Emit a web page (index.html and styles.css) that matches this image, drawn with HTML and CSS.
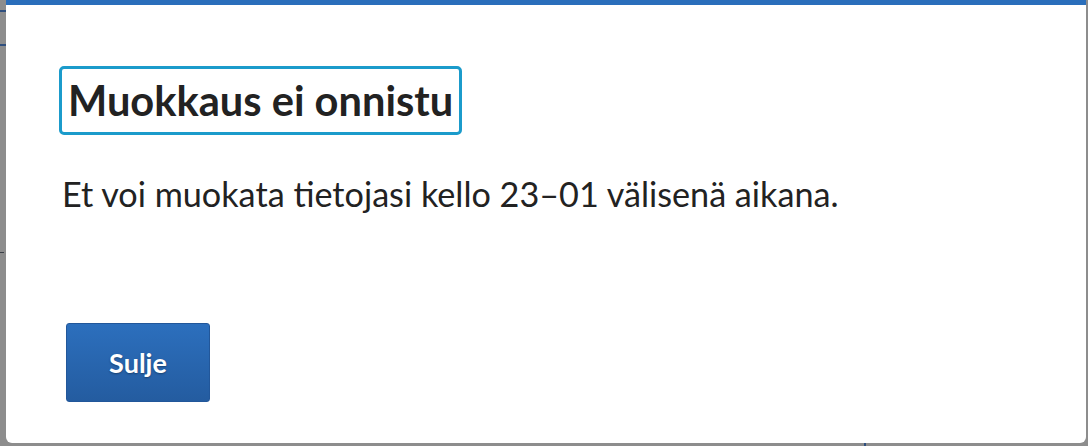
FILE: index.html
```html
<!DOCTYPE html>
<html lang="fi">
<head>
    <meta charset="UTF-8">
    <meta name="viewport" content="width=device-width, initial-scale=1.0">
    <title>Muokkaus ei onnistu</title>
    <link rel="stylesheet" href="styles.css">
</head>
<body>
    <div class="backdrop">
        <div class="dialog" role="dialog" aria-labelledby="dialog-title">
            <h2 class="dialog-title" id="dialog-title" tabindex="-1">Muokkaus ei onnistu</h2>
            <p class="dialog-text">Et voi muokata tietojasi kello 23–01 välisenä aikana.</p>
            <button class="btn" type="button">Sulje</button>
        </div>
    </div>
</body>
</html>
```

FILE: styles.css
```css
*{
    margin:0;
    padding:0;
    box-sizing:border-box;
}
html,body{
    height:100%;
}
body {
    font-family:Lato,"Open Sans",Arial,sans-serif;
    color:#222;
    background:#8d8d8d;
    overflow:hidden;
}
/* page behind the overlay peeking through on the edges */
.backdrop {
    height:100%;
    background:
        linear-gradient(#2f4f7e,#2f4f7e) 0 10px / 6px 2px no-repeat,
        linear-gradient(#2f4f7e,#2f4f7e) 0 44px / 6px 2px no-repeat,
        linear-gradient(#3a3f46,#3a3f46) 0 252px / 4px 1px no-repeat,
        linear-gradient(#2f4f7e,#2f4f7e) 864px 443px / 2px 3px no-repeat,
        #8d8d8d;
    padding-left:6px;
}
.dialog {
    width:1080px;
    height:443px;
    background:#fff;
    border-top:5px solid #2a6ebb;
    border-radius:0 0 6px 6px;
    padding:61px 0 0 56px;
    display:flex;
    flex-direction:column;
    align-items:flex-start;
}
.dialog-title {
    margin-left:-3px;
    height:69px;
    padding:0 6px;
    border:3px solid #1b9bcb;
    border-radius:5px;
    font-size:41.6px;
    font-weight:700;
    line-height:63px;
    color:#222;
    outline:none;
}
.dialog-text {
    margin-top:39px;
    font-size:34.2px;
    line-height:40px;
}
.btn {
    margin:109px 0 0 4px;
    width:144px;
    height:79px;
    border:1px solid #22579a;
    border-radius:3px;
    background:linear-gradient(#2c6fbd,#245ca0);
    color:#fff;
    font-family:inherit;
    font-size:27px;
    font-weight:700;
    text-shadow:0 1px 2px rgba(0,0,0,0.35);
}
```
